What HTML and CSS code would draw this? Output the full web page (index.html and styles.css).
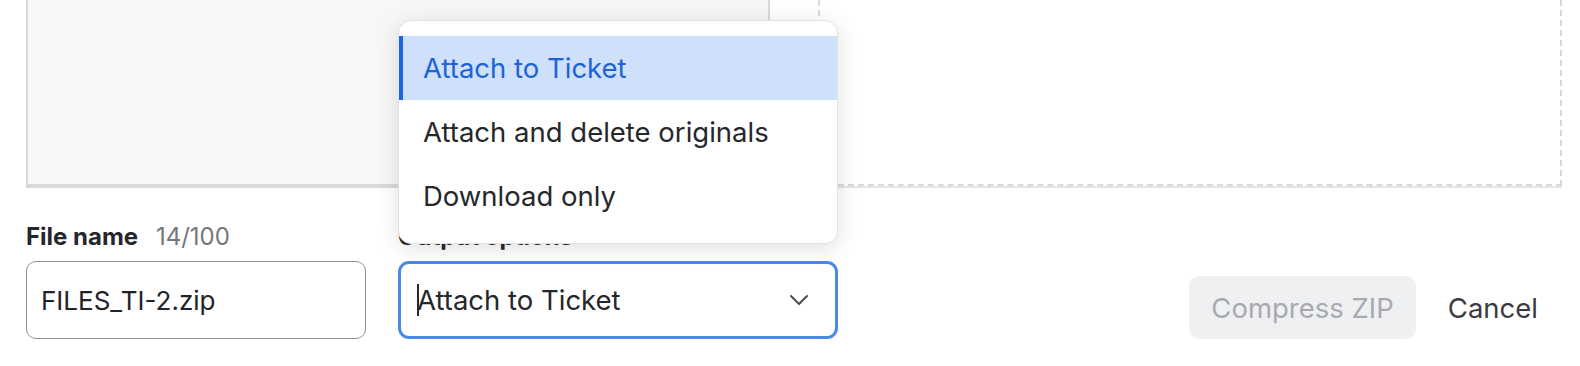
FILE: index.html
```html
<!DOCTYPE html>
<html lang="en">
<head>
    <meta charset="UTF-8">
    <title>Compress files</title>
    <link rel="stylesheet" href="styles.css">
</head>
<body>
    <div class="page">
        <!-- preview panels -->
        <div class="previews">
            <div class="preview preview-files"></div>
            <div class="preview preview-drop"></div>
        </div>

        <!-- form row -->
        <div class="form-row">
            <div class="field field-name">
                <div class="label">
                    <span class="label-title">File name</span>
                    <span class="label-count">14/100</span>
                </div>
                <div class="input">FILES_TI-2.zip</div>
            </div>

            <div class="field field-output">
                <div class="label">
                    <span class="label-title">Output options</span>
                </div>
                <div class="select">
                    <span class="caret"></span>
                    <span class="select-value">Attach to Ticket</span>
                    <svg class="chevron" width="20" height="12" viewBox="0 0 20 12">
                        <polyline points="2,2 10,10 18,2" fill="none" stroke="#4a4b50" stroke-width="2" stroke-linecap="round" stroke-linejoin="round"/>
                    </svg>

                    <!-- open dropdown -->
                    <ul class="menu">
                        <li class="menu-item active">Attach to Ticket</li>
                        <li class="menu-item">Attach and delete originals</li>
                        <li class="menu-item">Download only</li>
                    </ul>
                </div>
            </div>

            <div class="actions">
                <button class="btn btn-primary" disabled>Compress ZIP</button>
                <button class="btn btn-link">Cancel</button>
            </div>
        </div>
    </div>
</body>
</html>
```

FILE: styles.css
```css
/* reset */
* {
    margin: 0;
    padding: 0;
    box-sizing: border-box;
    font-family: Inter, "Noto Sans", sans-serif;
}

body {
    background-color: #ffffff;
    color: #26272b;
}

.page {
    padding: 0 18px 0 26px;
}

/* preview panels */
.previews {
    display: grid;
    grid-template-columns: 1fr 1fr;
    gap: 48px;
    height: 188px;
}

.preview-files {
    background-color: #f7f7f7;
    border: 2px solid #d9d9d9;
    border-top: none;
    border-bottom-width: 4px;
}

.preview-drop {
    background-color: #ffffff;
    border: 2px dashed #d9d9d9;
    border-top: none;
    height: 186px;
    box-shadow: 0 2px 0 #e4e4e4;
}

/* form row */
.form-row {
    display: flex;
    align-items: flex-end;
    margin-top: 34px;
}

.field {
    display: flex;
    flex-direction: column;
}

.field-name {
    width: 340px;
    margin-right: 32px;
}

.field-output {
    width: 440px;
}

.label {
    height: 30px;
    line-height: 30px;
    font-size: 24px;
    margin-bottom: 9px;
    white-space: nowrap;
}

.label-title {
    font-weight: 700;
    color: #26272b;
}

.label-count {
    color: #74767c;
    margin-left: 11px;
}

.input {
    height: 78px;
    border: 1px solid #8e9099;
    border-radius: 10px;
    padding: 0 14px;
    display: flex;
    align-items: center;
    font-size: 26px;
    color: #222326;
}

/* select */
.select {
    position: relative;
    height: 78px;
    border: 3px solid #4a88e8;
    border-radius: 11px;
    padding: 0 26px 0 16px;
    display: flex;
    align-items: center;
    font-size: 27.5px;
    color: #26272b;
}

.caret {
    display: inline-block;
    width: 2px;
    height: 32px;
    background-color: #26272b;
    margin-right: -2px;
}

.select-value {
    flex: 1;
}

/* dropdown menu */
.menu {
    position: absolute;
    left: -3px;
    right: -3px;
    bottom: calc(100% + 20px);
    list-style: none;
    background-color: #ffffff;
    border: 1px solid #e2e2e4;
    border-radius: 13px;
    padding: 15px 0;
    box-shadow: 0 4px 22px rgba(0, 0, 0, 0.13);
}

.menu-item {
    height: 64px;
    line-height: 64px;
    padding-left: 20px;
    font-size: 27.5px;
    color: #26272b;
    border-left: 4px solid transparent;
}

.menu-item.active {
    background-color: #cfe0fb;
    border-left-color: #1a66e0;
    color: #1d63d8;
}

/* buttons */
.actions {
    margin-left: auto;
    display: flex;
    gap: 8px;
}

.btn {
    height: 63px;
    padding: 0 24px;
    border: none;
    border-radius: 10px;
    font-size: 27.5px;
    background: none;
    cursor: pointer;
}

.btn-primary {
    padding: 0 22px;
    background-color: #eff0f2;
    color: #a8aaaf;
}

.btn-link {
    color: #3b3c40;
}
```
